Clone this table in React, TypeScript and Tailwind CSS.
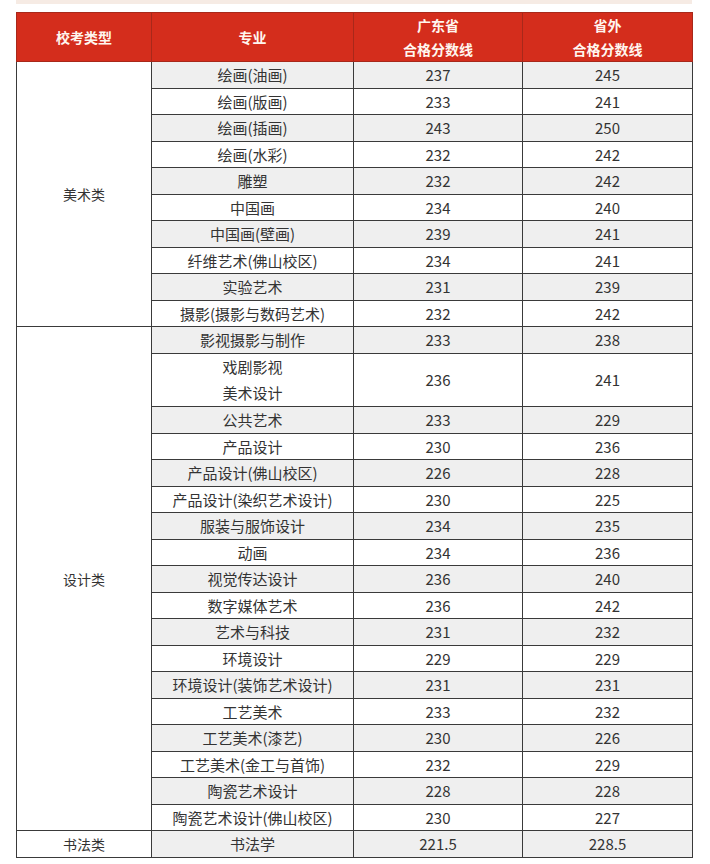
type Row = { name: string[]; gd: string; out: string };

const groups: { type: string; rows: Row[] }[] = [
  {
    type: "美术类",
    rows: [
      { name: ["绘画(油画)"], gd: "237", out: "245" },
      { name: ["绘画(版画)"], gd: "233", out: "241" },
      { name: ["绘画(插画)"], gd: "243", out: "250" },
      { name: ["绘画(水彩)"], gd: "232", out: "242" },
      { name: ["雕塑"], gd: "232", out: "242" },
      { name: ["中国画"], gd: "234", out: "240" },
      { name: ["中国画(壁画)"], gd: "239", out: "241" },
      { name: ["纤维艺术(佛山校区)"], gd: "234", out: "241" },
      { name: ["实验艺术"], gd: "231", out: "239" },
      { name: ["摄影(摄影与数码艺术)"], gd: "232", out: "242" },
    ],
  },
  {
    type: "设计类",
    rows: [
      { name: ["影视摄影与制作"], gd: "233", out: "238" },
      { name: ["戏剧影视", "美术设计"], gd: "236", out: "241" },
      { name: ["公共艺术"], gd: "233", out: "229" },
      { name: ["产品设计"], gd: "230", out: "236" },
      { name: ["产品设计(佛山校区)"], gd: "226", out: "228" },
      { name: ["产品设计(染织艺术设计)"], gd: "230", out: "225" },
      { name: ["服装与服饰设计"], gd: "234", out: "235" },
      { name: ["动画"], gd: "234", out: "236" },
      { name: ["视觉传达设计"], gd: "236", out: "240" },
      { name: ["数字媒体艺术"], gd: "236", out: "242" },
      { name: ["艺术与科技"], gd: "231", out: "232" },
      { name: ["环境设计"], gd: "229", out: "229" },
      { name: ["环境设计(装饰艺术设计)"], gd: "231", out: "231" },
      { name: ["工艺美术"], gd: "233", out: "232" },
      { name: ["工艺美术(漆艺)"], gd: "230", out: "226" },
      { name: ["工艺美术(金工与首饰)"], gd: "232", out: "229" },
      { name: ["陶瓷艺术设计"], gd: "228", out: "228" },
      { name: ["陶瓷艺术设计(佛山校区)"], gd: "230", out: "227" },
    ],
  },
  {
    type: "书法类",
    rows: [{ name: ["书法学"], gd: "221.5", out: "228.5" }],
  },
];

export default function App() {
  let idx = 0;
  return (
    <div
      className="min-h-[864px] w-[710px] bg-white pl-4 text-[#333]"
      style={{ fontFamily: '"Noto Sans CJK SC", "Noto Sans", sans-serif' }}
    >
      <div className="h-[4px] w-[676px] bg-[#f6ebe4]" />
      <table className="mt-[8px] w-[676px] table-fixed border-collapse text-center text-[15px] leading-[20px]">
        <colgroup>
          <col className="w-[135px]" />
          <col className="w-[202px]" />
          <col className="w-[169px]" />
          <col className="w-[170px]" />
        </colgroup>
        <thead>
          <tr className="h-[48px] bg-[#d42d1c] text-[14px] font-bold leading-[24px] text-[#fff6ef]">
            <th className="border border-[#a8281a] p-0">校考类型</th>
            <th className="border border-[#a8281a] p-0">专业</th>
            <th className="border border-[#a8281a] p-0">
              广东省
              <br />
              合格分数线
            </th>
            <th className="border border-[#a8281a] p-0">
              省外
              <br />
              合格分数线
            </th>
          </tr>
        </thead>
        <tbody>
          {groups.map((g) =>
            g.rows.map((r, i) => {
              const n = idx++;
              const bg = n % 2 === 0 ? "bg-[#efefef]" : "bg-white";
              const h = r.name.length > 1 ? "h-[52px]" : n % 2 === 0 ? "h-[27px]" : "h-[26px]";
              return (
                <tr key={g.type + i} className={h}>
                  {i === 0 && (
                    <td rowSpan={g.rows.length} className="border border-[#3a3a3a] bg-white p-0 text-[14px]">
                      {g.type}
                    </td>
                  )}
                  <td className={`border border-[#3a3a3a] p-0 ${bg}`}>
                    {r.name.map((t) => (
                      <div key={t} className={r.name.length > 1 ? "leading-[26px]" : ""}>
                        {t}
                      </div>
                    ))}
                  </td>
                  <td className={`border border-[#3a3a3a] p-0 ${bg}`}>{r.gd}</td>
                  <td className={`border border-[#3a3a3a] p-0 ${bg}`}>{r.out}</td>
                </tr>
              );
            })
          )}
        </tbody>
      </table>
    </div>
  );
}
